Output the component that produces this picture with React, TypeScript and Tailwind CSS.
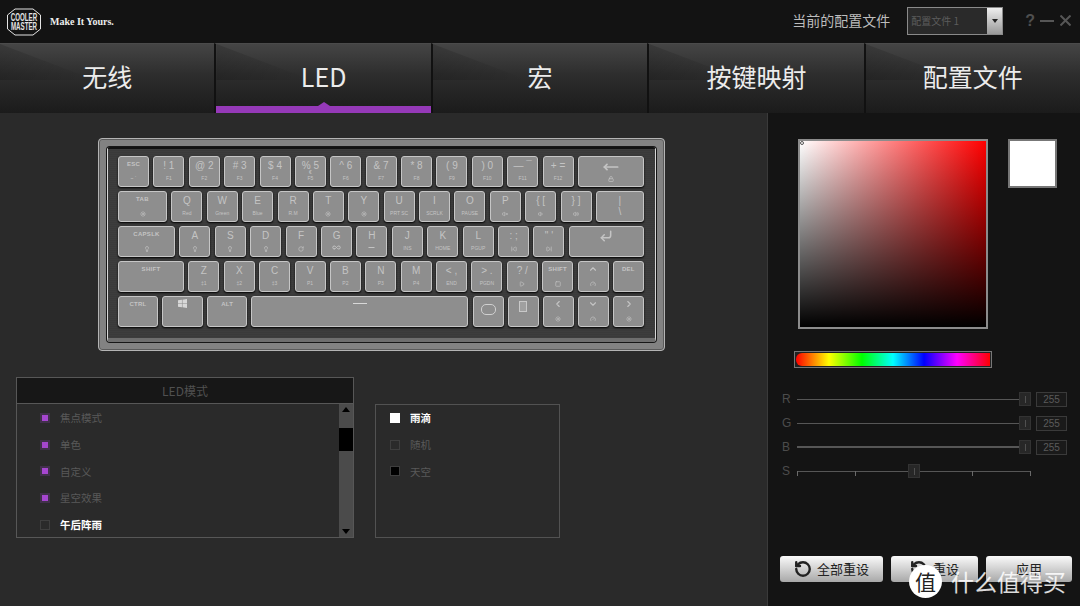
import React from 'react';
import { RotateCcw, Sun, Lock, Volume1, Volume2, VolumeX, SkipBack, SkipForward, Play, Square, Gauge, ChevronLeft, ChevronRight, ChevronUp, ChevronDown, CornerDownLeft, MoveLeft, Lightbulb, Infinity as InfinityIcon, RotateCw, Minus } from 'lucide-react';

const cjk = { fontFamily: '"Noto Sans CJK SC", "Liberation Sans", sans-serif' };

type KeyDef = { w: number; top?: React.ReactNode; bottom?: React.ReactNode; big?: boolean };

const ico = (Icon: React.ComponentType<{ size?: number; strokeWidth?: number }>, size = 6) => <Icon size={size} strokeWidth={2.6} />;

const WinLogo = () => (
  <svg width="9" height="9" viewBox="0 0 10 10" fill="#d8d8d8">
    <path d="M0 1.4 4.4.8v3.9H0zM5 .7 10 0v4.7H5zM0 5.3h4.4v3.9L0 8.6zM5 5.3h5V10L5 9.3z" />
  </svg>
);

const rows: KeyDef[][] = [
  [
    { w: 31, top: 'ESC', bottom: '~ `' },
    { w: 31, top: '! 1', bottom: 'F1', big: true },
    { w: 31, top: '@ 2', bottom: 'F2', big: true },
    { w: 31, top: '# 3', bottom: 'F3', big: true },
    { w: 31, top: '$ 4', bottom: 'F4', big: true },
    {
      w: 31,
      top: '% 5',
      bottom: (
        <span className="relative block">
          <span className="absolute left-1/2 -translate-x-1/2 -top-[6px]">€</span>F5
        </span>
      ),
      big: true,
    },
    { w: 31, top: '^ 6', bottom: 'F6', big: true },
    { w: 31, top: '& 7', bottom: 'F7', big: true },
    { w: 31, top: '* 8', bottom: 'F8', big: true },
    { w: 31, top: '( 9', bottom: 'F9', big: true },
    { w: 31, top: ') 0', bottom: 'F10', big: true },
    { w: 31, top: '— ¯', bottom: 'F11', big: true },
    { w: 31, top: '+ =', bottom: 'F12', big: true },
    { w: 66, top: ico(MoveLeft, 16), bottom: ico(Lock) },
  ],
  [
    { w: 49, top: 'TAB', bottom: ico(Sun) },
    { w: 31, top: 'Q', bottom: 'Red', big: true },
    { w: 31, top: 'W', bottom: 'Green', big: true },
    { w: 31, top: 'E', bottom: 'Blue', big: true },
    { w: 31, top: 'R', bottom: 'R.M', big: true },
    { w: 31, top: 'T', bottom: ico(Sun), big: true },
    { w: 31, top: 'Y', bottom: ico(Sun), big: true },
    { w: 31, top: 'U', bottom: 'PRT SC', big: true },
    { w: 31, top: 'I', bottom: 'SCRLK', big: true },
    { w: 31, top: 'O', bottom: 'PAUSE', big: true },
    { w: 31, top: 'P', bottom: ico(VolumeX), big: true },
    { w: 31, top: '{ [', bottom: ico(Volume1), big: true },
    { w: 31, top: '} ]', bottom: ico(Volume2), big: true },
    { w: 48, top: '|', bottom: <span className="text-[10px] leading-[8px]">\</span>, big: true },
  ],
  [
    { w: 57, top: 'CAPSLK', bottom: ico(Lightbulb) },
    { w: 31, top: 'A', bottom: ico(Lightbulb), big: true },
    { w: 31, top: 'S', bottom: ico(Lightbulb), big: true },
    { w: 31, top: 'D', bottom: ico(Lightbulb), big: true },
    { w: 31, top: 'F', bottom: ico(RotateCw), big: true },
    { w: 31, top: 'G', bottom: ico(InfinityIcon, 9), big: true },
    { w: 31, top: 'H', bottom: ico(Minus, 9), big: true },
    { w: 31, top: 'J', bottom: 'INS', big: true },
    { w: 31, top: 'K', bottom: 'HOME', big: true },
    { w: 31, top: 'L', bottom: 'PGUP', big: true },
    { w: 31, top: ': ;', bottom: ico(SkipBack), big: true },
    { w: 31, top: '" \'', bottom: ico(SkipForward), big: true },
    { w: 75, top: ico(CornerDownLeft, 14) },
  ],
  [
    { w: 66, top: 'SHIFT' },
    { w: 31, top: 'Z', bottom: '‡1', big: true },
    { w: 31, top: 'X', bottom: '‡2', big: true },
    { w: 31, top: 'C', bottom: '‡3', big: true },
    { w: 31, top: 'V', bottom: 'P1', big: true },
    { w: 31, top: 'B', bottom: 'P2', big: true },
    { w: 31, top: 'N', bottom: 'P3', big: true },
    { w: 31, top: 'M', bottom: 'P4', big: true },
    { w: 31, top: '< ,', bottom: 'END', big: true },
    { w: 31, top: '> .', bottom: 'PGDN', big: true },
    { w: 31, top: '? /', bottom: ico(Play), big: true },
    { w: 31, top: 'SHIFT', bottom: ico(Square) },
    { w: 31, top: ico(ChevronUp, 10), bottom: ico(Gauge) },
    { w: 31, top: 'DEL' },
  ],
  [
    { w: 40, top: 'CTRL' },
    { w: 41, top: <WinLogo /> },
    { w: 40, top: 'ALT' },
    { w: 217, top: <span className="block w-[14px] h-[1px] mt-[4px] bg-[#d8d8d8]" /> },
    { w: 31, top: <span className="block w-[15px] h-[11px] mt-[5px] rounded-[5px] border border-[#d0d0d0]" /> },
    { w: 31, top: <span className="block w-[8px] h-[11px] mt-[2px] border border-[#c8c8c8] bg-[#a0a0a0]" /> },
    { w: 31, top: ico(ChevronLeft, 10), bottom: ico(Sun) },
    { w: 31, top: ico(ChevronDown, 10), bottom: ico(Gauge) },
    { w: 31, top: ico(ChevronRight, 10), bottom: ico(Sun) },
  ],
];

function Key({ k }: { k: KeyDef }) {
  return (
    <div
      className="h-[31px] shrink-0 rounded-[3px] border border-[#c6c6c6] bg-[#8e8e8e] flex flex-col items-center justify-between pt-[2px] pb-[4px] text-[#c4c4c4] shadow-[0_1px_2px_#000]"
      style={{ width: k.w, fontFamily: '"Liberation Sans", sans-serif' }}
    >
      <div className={k.big ? 'text-[10px] leading-[13px] whitespace-nowrap' : 'text-[6px] leading-[10px] font-bold tracking-[0.3px] whitespace-nowrap'}>{k.top}</div>
      <div className="text-[5px] leading-[7px] whitespace-nowrap">{k.bottom}</div>
    </div>
  );
}

function Keyboard() {
  return (
    <div className="w-[567px] h-[213px] rounded-[4px] border border-[#b4b4b4] bg-[#828282] p-[8px] shadow-[inset_0_0_0_1px_#5a5a5a]">
      <div className="w-full h-full rounded-[3px] border-t-2 border-l border-r border-b-[4px] border-t-[#111] border-l-[#d8d8d8] border-r-[#d8d8d8] border-b-[#6e6e6e] shadow-[0_0_0_1px_#161616] bg-[repeating-linear-gradient(0deg,#363636_0px,#444444_1px,#303030_2px)] pl-[10px] pr-[11px] pt-[7px] flex flex-col gap-[4px]">
        {rows.map((row, i) => (
          <div key={i} className="flex justify-between">
            {row.map((k, j) => (
              <Key key={j} k={k} />
            ))}
          </div>
        ))}
      </div>
    </div>
  );
}

function Tab({ label, active }: { label: string; active?: boolean }) {
  return (
    <div className="relative flex-1 h-full border-l-2 border-[#111] first:border-l-0 border-t border-t-[#4b4b4b] flex items-center justify-center pb-[4px] bg-[linear-gradient(#454545,#2d2d2d_45%,#1b1b1b)]">
      <div className="absolute left-0 top-0 w-[95px] h-[36px] bg-[linear-gradient(to_right,rgba(0,0,0,0.16),transparent)] [clip-path:polygon(0_0,100%_100%,0_100%)]" />
      <span className="relative text-[25px] text-[#ececec]" style={cjk}>{label}</span>
      {active && (
        <>
          <div className="absolute left-0 right-0 bottom-0 h-[7px] bg-[#9539b8]" />
          <div className="absolute left-1/2 -translate-x-1/2 bottom-[7px] w-0 h-0 border-l-[6px] border-r-[6px] border-b-[4px] border-l-transparent border-r-transparent border-b-[#9539b8]" />
        </>
      )}
    </div>
  );
}

function Slider({ label, pos, value, thick, ticks }: { label: string; pos: number; value?: string; thick?: boolean; ticks?: boolean }) {
  return (
    <div className="flex items-center h-[24px]">
      <div className="w-[15px] text-[12px] text-[#4c4c4c]" style={{ fontFamily: '"Liberation Sans", sans-serif' }}>{label}</div>
      <div className="relative w-[234px] h-[14px] flex items-center">
        <div className={thick ? 'w-full h-[2px] bg-[#565656]' : 'w-full h-[1px] bg-[#565656]'} />
        {ticks && (
          <div className="absolute left-0 right-0 top-[7px] flex justify-between">
            {[0, 1, 2, 3, 4].map((t) => (
              <span key={t} className="w-[1px] h-[5px] bg-[#6a6a6a]" />
            ))}
          </div>
        )}
        <div
          className="absolute top-0 w-[12px] h-[14px] bg-[#272727] border border-[#333] flex items-center justify-center"
          style={{ left: pos }}
        >
          <span className="w-[1px] h-[7px] bg-[#505050]" />
        </div>
      </div>
      {value && (
        <div className="ml-[5px] w-[31px] h-[15px] border border-[#3a3a3a] bg-[#1a1a1a] text-[10px] leading-[13px] text-[#5a5a5a] text-center" style={{ fontFamily: '"Liberation Sans", sans-serif' }}>
          {value}
        </div>
      )}
    </div>
  );
}

function Check({ label, state, bright }: { label: string; state: 'purple' | 'none' | 'white' | 'black'; bright?: boolean }) {
  const box = {
    purple: 'bg-[#a646d0] border-2 border-[#41304b]',
    none: 'bg-transparent border border-[#3e3e3e]',
    white: 'bg-white border border-white',
    black: 'bg-black border border-[#3e3e3e]',
  }[state];
  return (
    <div className="flex items-center h-[26.6px] gap-[10px]">
      <span className={`w-[10px] h-[10px] ${box}`} />
      <span className={bright ? 'text-[10.5px] text-white font-bold' : 'text-[10.5px] text-[#595959]'} style={cjk}>{label}</span>
    </div>
  );
}

function ActionButton({ label, w, icon }: { label: string; w: number; icon?: boolean }) {
  return (
    <div
      className="h-[26px] rounded-[3px] bg-[linear-gradient(#fafafa,#a8a8a8)] flex items-center justify-center gap-[5px] text-[13px] text-[#222]"
      style={{ width: w, ...cjk }}
    >
      {icon && <RotateCcw size={18} strokeWidth={3.2} className="text-[#222]" />}
      {label}
    </div>
  );
}

export default function App() {
  return (
    <div className="relative w-[1080px] h-[606px] overflow-hidden bg-[#2a2a2a] flex flex-col">
      <header className="h-[43px] shrink-0 bg-[#131313] flex items-center justify-between pl-[7px] pr-[9px] pb-[2px]">
        <div className="flex items-center gap-[9px] pt-[2px]">
          <svg width="34" height="28" viewBox="0 0 34 28">
            <polygon points="8,1 26,1 33.5,7 33.5,21 26,27 8,27 0.5,21 0.5,7" fill="none" stroke="#e4e4e4" strokeWidth="1" />
            <g transform="scale(0.62,1)" fontSize="10" fontWeight="700" fill="#e4e4e4" fontFamily="Liberation Sans" textAnchor="middle">
              <text x="27.4" y="13">COOLER</text>
              <text x="27.4" y="22.5">MASTER</text>
            </g>
          </svg>
          <span className="text-[10px] font-bold text-[#eee] whitespace-nowrap" style={{ fontFamily: '"Liberation Serif", serif' }}>Make It Yours.</span>
        </div>
        <div className="flex items-center">
          <span className="text-[14px] text-[#bdbdbd] whitespace-nowrap" style={cjk}>当前的配置文件</span>
          <div className="ml-[17px] w-[96px] h-[28px] flex border border-[#8a8a8a] bg-[#2a2a2a]">
            <div className="flex-1 pl-[3px] text-[10px] leading-[26px] text-[#5c5c5c]" style={cjk}>配置文件 1</div>
            <div className="w-[15px] bg-[linear-gradient(#eee,#999)] flex items-center justify-center">
              <span className="w-0 h-0 border-l-[3px] border-r-[3px] border-t-[4px] border-l-transparent border-r-transparent border-t-[#222]" />
            </div>
          </div>
          <span className="ml-[22px] text-[16px] text-[#4f4f4f] font-bold" style={{ fontFamily: '"Liberation Sans", sans-serif' }}>?</span>
          <span className="ml-[5px] w-[14px] h-[2px] bg-[#565656]" />
          <svg className="ml-[6px]" width="11" height="11" viewBox="0 0 11 11" stroke="#565656" strokeWidth="2">
            <path d="M0.5 0.5 10.5 10.5M10.5 0.5 0.5 10.5" />
          </svg>
        </div>
      </header>

      <nav className="h-[70px] shrink-0 flex">
        <Tab label="无线" />
        <Tab label="LED" active />
        <Tab label="宏" />
        <Tab label="按键映射" />
        <Tab label="配置文件" />
      </nav>

      <div className="flex-1 flex min-h-0">
        <main className="w-[767px] shrink-0 flex flex-col pt-[25px]">
          <div className="ml-[98px]">
            <Keyboard />
          </div>
          <div className="mt-[26px] ml-[16px] flex items-start gap-[21px]">
            <div className="w-[338px] h-[161px] border border-[#575757] flex flex-col">
              <div className="h-[26px] shrink-0 bg-[#171717] border-b border-[#575757] text-center text-[12px] leading-[25px] text-[#505050]" style={cjk}>LED模式</div>
              <div className="flex-1 flex min-h-0">
                <div className="flex-1 pl-[23px] pt-[1px]">
                  <Check label="焦点模式" state="purple" />
                  <Check label="单色" state="purple" />
                  <Check label="自定义" state="purple" />
                  <Check label="星空效果" state="purple" />
                  <Check label="午后阵雨" state="none" bright />
                </div>
                <div className="w-[14px] bg-[#4b4b4b] flex flex-col items-center justify-between py-[3px] relative">
                  <span className="w-0 h-0 border-l-[4px] border-r-[4px] border-b-[5px] border-l-transparent border-r-transparent border-b-black" />
                  <span className="absolute top-[24px] left-0 w-[14px] h-[23px] bg-black" />
                  <span className="w-0 h-0 border-l-[4px] border-r-[4px] border-t-[5px] border-l-transparent border-r-transparent border-t-black" />
                </div>
              </div>
            </div>
            <div className="mt-[27px] w-[185px] h-[134px] border border-[#525252] pl-[14px]">
              <Check label="雨滴" state="white" bright />
              <Check label="随机" state="none" />
              <Check label="天空" state="black" />
            </div>
          </div>
        </main>

        <aside className="flex-1 bg-[#141414] border-l border-[#3a3a3a] flex flex-col pl-[14px] pt-[26px] pb-[24px]">
          <div className="flex items-start ml-[16px]">
            <div className="relative w-[190px] h-[190px] border-2 border-[#8c8c8c] bg-[linear-gradient(to_top,#000,transparent),linear-gradient(to_right,#fff,#f00)]">
              <span className="absolute left-0 top-0 w-[4px] h-[4px] rounded-full border border-[#555]" />
            </div>
            <div className="ml-[20px] w-[49px] h-[49px] bg-white border-2 border-[#777]" />
          </div>
          <div className="mt-[22px] ml-[12px] w-[198px] h-[17px] border border-[#777] bg-[#222] p-[1px]">
            <div className="w-full h-full rounded-l-[6px] bg-[linear-gradient(to_right,#f00,#ff0_17%,#0f0_34%,#0ff_50%,#00f_66%,#f0f_83%,#f00)]" />
          </div>
          <div className="mt-[19px]">
            <Slider label="R" pos={222} value="255" />
            <Slider label="G" pos={222} value="255" />
            <Slider label="B" pos={222} value="255" thick />
            <Slider label="S" pos={111} ticks />
          </div>
          <div className="mt-auto flex gap-[8px] -ml-[2px]">
            <ActionButton label="全部重设" w={103} icon />
            <ActionButton label="重设" w={87} icon />
            <ActionButton label="应用" w={86} />
          </div>
        </aside>
      </div>

      <div className="absolute left-[909px] top-[564px] flex items-center gap-[9px]">
        <div className="w-[33px] h-[33px] rounded-full bg-white text-[#222] flex items-center justify-center text-[21px] leading-none" style={cjk}>值</div>
        <span className="text-[23px] text-white/85 whitespace-nowrap" style={cjk}>什么值得买</span>
      </div>
    </div>
  );
}
